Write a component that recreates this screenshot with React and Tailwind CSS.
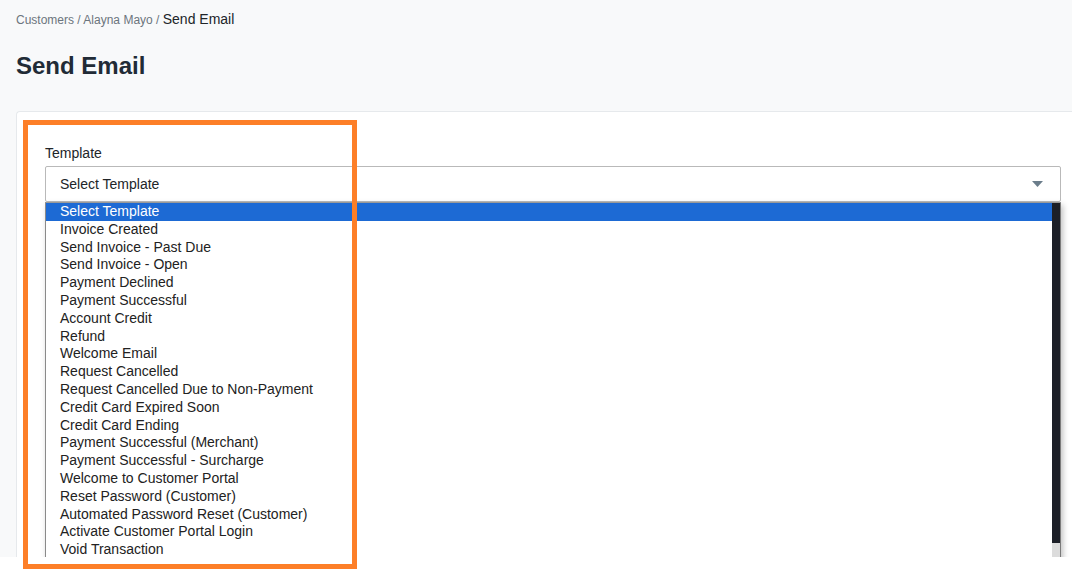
import React from "react";

const items = [
  "Select Template",
  "Invoice Created",
  "Send Invoice - Past Due",
  "Send Invoice - Open",
  "Payment Declined",
  "Payment Successful",
  "Account Credit",
  "Refund",
  "Welcome Email",
  "Request Cancelled",
  "Request Cancelled Due to Non-Payment",
  "Credit Card Expired Soon",
  "Credit Card Ending",
  "Payment Successful (Merchant)",
  "Payment Successful - Surcharge",
  "Welcome to Customer Portal",
  "Reset Password (Customer)",
  "Automated Password Reset (Customer)",
  "Activate Customer Portal Login",
  "Void Transaction",
];

export default function App() {
  return (
    <div
      className="relative w-[1072px] h-[583px] bg-white overflow-hidden"
      style={{ fontFamily: '"Liberation Sans", Arial, sans-serif' }}
    >
      <div className="h-[557px] bg-[#f8f9fa] pl-4 pt-[10px] flex flex-col overflow-hidden">
        <div className="leading-[18px] text-[12px] text-[#6c757d]">
          Customers / Alayna Mayo /{" "}
          <span className="text-[14px] text-[#212529]">Send Email</span>
        </div>
        <h1 className="mt-[22px] text-[24px] leading-[30px] font-bold text-[#212b36]">
          Send Email
        </h1>
        <div className="mt-[30px] flex-1 bg-white border-t border-l border-[#e6e9ec] rounded-tl-[4px] pl-[28px] pt-[31px]">
          <div className="text-[14px] leading-[20px] text-[#212529] mb-[3px]">Template</div>
          <div className="relative w-[1016px]">
            <div className="h-[36px] border border-[#b9b9b9] rounded-[2px] bg-white flex items-center justify-between pl-[14px] pr-[17px] text-[14px] text-[#212529]">
              <span>Select Template</span>
              <svg width="11" height="6" viewBox="0 0 11 6">
                <path d="M0 0 L11 0 L5.5 6 Z" fill="#6b7d8b" />
              </svg>
            </div>
            <div className="absolute left-0 top-[36px] w-[1016px] h-[360px] bg-white border-t border-[#9a9a9a] border-l border-l-[#8a8a8a] border-r border-r-[#7a7a7a] shadow-[2px_3px_6px_rgba(0,0,0,0.25)] flex">
              <div className="flex-1">
                {items.map((t, i) => (
                  <div
                    key={t}
                    className={
                      i === 0
                        ? "bg-[#1d6ad4] text-white pl-[14px] text-[14px] leading-[17.8px]"
                        : "text-[#222] pl-[14px] text-[14px] leading-[17.8px]"
                    }
                  >
                    {t}
                  </div>
                ))}
              </div>
              <div className="w-[8px] flex flex-col">
                <div className="h-[340px] bg-[#1c1f27]" />
                <div className="flex-1 bg-[#dcdcdc]" />
              </div>
            </div>
          </div>
        </div>
      </div>
      <div className="absolute left-[23px] top-[120px] w-[334px] h-[449px] border-[5px] border-[#fd7f28]" />
    </div>
  );
}
